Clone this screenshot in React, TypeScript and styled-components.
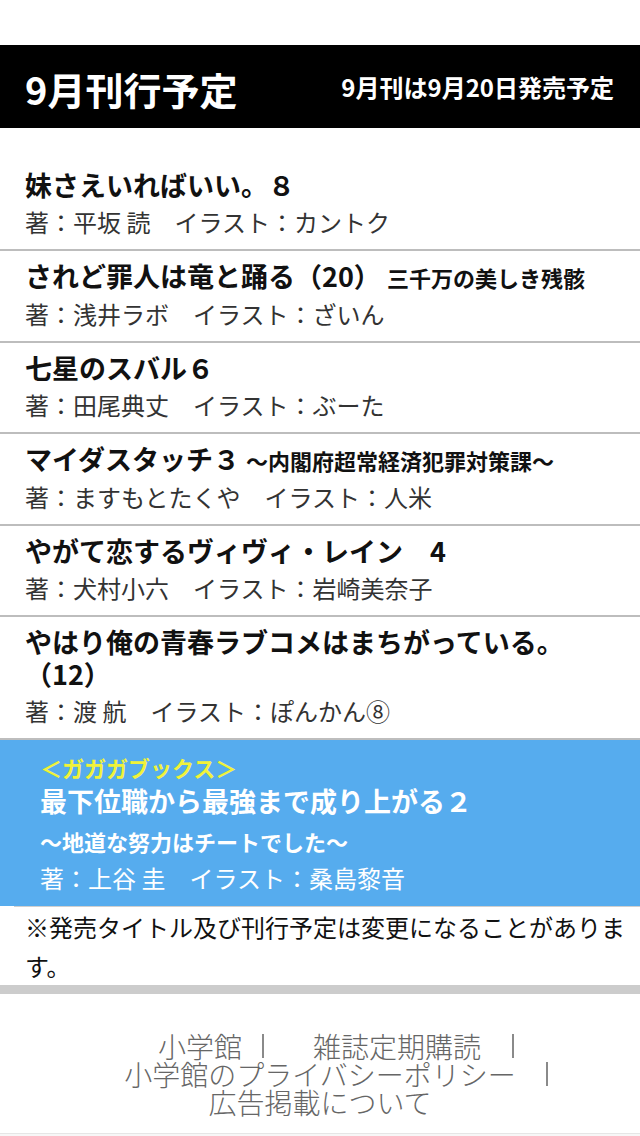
import React from "react";
import styled, { createGlobalStyle } from "styled-components";

const GlobalStyle = createGlobalStyle`
  html, body {
    margin: 0;
    padding: 0;
    background: #ffffff;
  }
  body {
    font-family: "Noto Sans CJK JP", "Noto Sans", sans-serif;
    color: #111;
  }
`;

const Page = styled.div`
  width: 640px;
  padding-top: 45px;
  background: #fff;
`;

const Header = styled.header`
  height: 83px;
  background: #000;
  color: #fff;
  display: flex;
  align-items: center;
  justify-content: space-between;
  padding: 0 26px 0 25px;
  box-sizing: border-box;
`;

const HeaderTitle = styled.h1`
  margin: 0;
  padding-top: 5px;
  font-size: 38px;
  line-height: 46px;
  font-weight: 700;
`;

const HeaderNote = styled.div`
  font-size: 24px;
  line-height: 30px;
  font-weight: 700;
`;

const List = styled.ul`
  list-style: none;
  margin: 32px 0 0;
  padding: 0;
`;

const Item = styled.li`
  padding: 9px 20px 11px 25px;
  border-bottom: 2px solid #bdbdbd;
`;

const Title = styled.div`
  font-size: 27px;
  line-height: 32px;
  font-weight: 700;
  color: #111;
`;

const Sub = styled.span`
  margin-left: 6px;
  font-size: 22px;
  font-weight: 700;
`;

const Credit = styled.div`
  margin-top: 5px;
  font-size: 24px;
  line-height: 32px;
  font-weight: 400;
  color: #333;
`;

const Feature = styled.div`
  background: #56acee;
  padding: 11px 20px 11px 40px;
  color: #fff;
`;

const Label = styled.div`
  font-size: 22px;
  line-height: 32px;
  font-weight: 700;
  color: #f0f23a;
`;

const FeatureTitle = styled.div`
  font-size: 27px;
  line-height: 36px;
  font-weight: 700;
`;

const FeatureSub = styled.div`
  margin-top: 2px;
  font-size: 22px;
  line-height: 40px;
  font-weight: 700;
`;

const FeatureCredit = styled.div`
  font-size: 24px;
  line-height: 34px;
  font-weight: 400;
`;

const Notice = styled.p`
  margin: 0 0 0 14px;
  padding: 0 10px 0 11px;
  border-top: 1px solid #cfcfcf;
  font-size: 24px;
  line-height: 39px;
  color: #111;
`;

const Divider = styled.div`
  height: 9px;
  background: #cccccc;
`;

const Footer = styled.footer`
  padding: 38px 0 17px 32px;
  color: #666;
  font-size: 28px;
  line-height: 28px;
  font-weight: 300;
`;

const FooterLine = styled.div<{ $trail?: number }>`
  display: flex;
  justify-content: center;
  align-items: center;
  padding-right: ${(p) => p.$trail ?? 0}px;
`;

const FooterLink = styled.a`
  color: #666;
  text-decoration: none;
`;

const Sep = styled.span<{ $l: number; $r: number }>`
  display: inline-block;
  width: 2px;
  height: 24px;
  background: #8a8a8a;
  margin-left: ${(p) => p.$l}px;
  margin-right: ${(p) => p.$r}px;
`;

const BottomEdge = styled.div`
  height: 4px;
  border-top: 1px solid #e6e6e6;
  background: #f7f7f7;
`;

type Book = { title: string; sub?: string; credit: string };

const books: Book[] = [
  { title: "妹さえいればいい。８", credit: "著：平坂 読　イラスト：カントク" },
  { title: "されど罪人は竜と踊る（20）", sub: "三千万の美しき残骸", credit: "著：浅井ラボ　イラスト：ざいん" },
  { title: "七星のスバル６", credit: "著：田尾典丈　イラスト：ぶーた" },
  { title: "マイダスタッチ３", sub: "～内閣府超常経済犯罪対策課～", credit: "著：ますもとたくや　イラスト：人米" },
  { title: "やがて恋するヴィヴィ・レイン　4", credit: "著：犬村小六　イラスト：岩崎美奈子" },
  { title: "やはり俺の青春ラブコメはまちがっている。（12）", credit: "著：渡 航　イラスト：ぽんかん⑧" },
];

export default function App() {
  return (
    <>
      <GlobalStyle />
      <Page>
        <Header>
          <HeaderTitle>9月刊行予定</HeaderTitle>
          <HeaderNote>9月刊は9月20日発売予定</HeaderNote>
        </Header>
        <List>
          {books.map((b) => (
            <Item key={b.title}>
              <Title>
                {b.title}
                {b.sub && <Sub>{b.sub}</Sub>}
              </Title>
              <Credit>{b.credit}</Credit>
            </Item>
          ))}
        </List>
        <Feature>
          <Label>＜ガガガブックス＞</Label>
          <FeatureTitle>最下位職から最強まで成り上がる２</FeatureTitle>
          <FeatureSub>～地道な努力はチートでした～</FeatureSub>
          <FeatureCredit>著：上谷 圭　イラスト：桑島黎音</FeatureCredit>
        </Feature>
        <Notice>※発売タイトル及び刊行予定は変更になることがあります。</Notice>
        <Divider />
        <Footer>
          <FooterLine>
            <FooterLink href="#">小学館</FooterLink>
            <Sep $l={20} $r={49} />
            <FooterLink href="#">雑誌定期購読</FooterLink>
            <Sep $l={31} $r={0} />
          </FooterLine>
          <FooterLine>
            <FooterLink href="#">小学館のプライバシーポリシー</FooterLink>
            <Sep $l={30} $r={0} />
          </FooterLine>
          <FooterLine $trail={32}>
            <FooterLink href="#">広告掲載について</FooterLink>
          </FooterLine>
        </Footer>
        <BottomEdge />
      </Page>
    </>
  );
}
